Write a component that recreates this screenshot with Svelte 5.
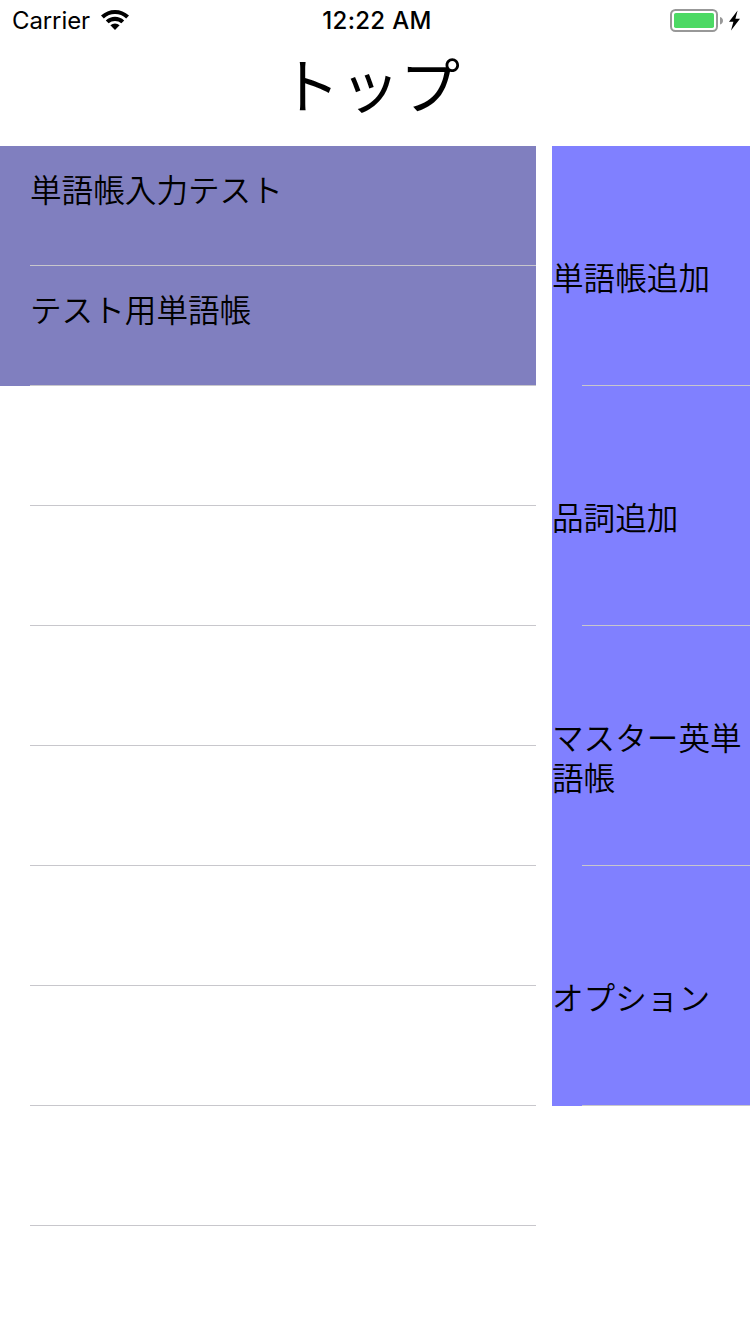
<script>
  const books = ['単語帳入力テスト', 'テスト用単語帳', '', '', '', '', '', '', ''];
  const actions = ['単語帳追加', '品詞追加', 'マスター英単語帳', 'オプション'];
</script>

<main class="screen">
  <header class="status">
    <div class="carrier">
      <span>Carrier</span>
      <svg class="wifi" width="28" height="20" viewBox="0 0 28 20" aria-hidden="true">
        <path d="M0 5.6Q6 0 14 0T28 5.6L25.2 8.4Q20.4 4.1 14 4.1T2.8 8.4Z" />
        <path d="M4.8 10.5Q8.9 6.8 14 6.8T23.2 10.5L20.4 13.3Q17.6 10.9 14 10.9T7.6 13.3Z" />
        <path d="M9.4 15.3Q11.4 13.4 14 13.4T18.6 15.3L14 20Z" />
      </svg>
    </div>
    <span class="time">12:22 AM</span>
    <svg class="battery" width="72" height="24" viewBox="0 0 72 24" aria-hidden="true">
      <rect x="1" y="1" width="46" height="21" rx="4.5" fill="none" stroke="#989898" stroke-width="2" />
      <rect x="4" y="4" width="40" height="15" rx="1.8" fill="#4cd964" />
      <path d="M50 8Q53 9 53 11.8T50 15.6Z" fill="#989898" />
      <path d="M67.6 1.5L59 12.8H63.4L61 21.5L70 9.8H65.4Z" />
    </svg>
  </header>

  <h1>トップ</h1>

  <div class="lists">
    <ul class="books">
      {#each books as book}
        <li class:filled={book}><span>{book}</span></li>
      {/each}
    </ul>
    <ul class="actions">
      {#each actions as action}
        <li><span>{action}</span></li>
      {/each}
    </ul>
  </div>
</main>

<style>
  :global(body) {
    margin: 0;
    background: #fff;
  }
  .screen {
    width: 750px;
    height: 1334px;
    overflow: hidden;
    color: #000;
    font-family: 'Noto Sans CJK JP', sans-serif;
  }
  .status {
    display: grid;
    grid-template-columns: 1fr auto 1fr;
    align-items: center;
    height: 42px;
    box-sizing: border-box;
    padding: 0 8px 0 12px;
    font: 24px/42px Inter, sans-serif;
  }
  .carrier {
    display: flex;
    align-items: center;
    gap: 11px;
    letter-spacing: -0.1px;
  }
  .wifi {
    margin-bottom: 2px;
  }
  .time {
    font-weight: 550;
    letter-spacing: 0.3px;
  }
  .battery {
    justify-self: end;
    margin-bottom: 1px;
  }
  h1 {
    height: 104px;
    box-sizing: border-box;
    margin: 0;
    padding-right: 10px;
    font-size: 60px;
    font-weight: 400;
    line-height: 81px;
    text-align: center;
  }
  .lists {
    display: flex;
    gap: 16px;
  }
  ul {
    margin: 0;
    padding: 0;
    list-style: none;
    font-size: 31.6px;
    font-weight: 350;
    line-height: 40px;
  }
  li {
    display: flex;
    box-sizing: border-box;
  }
  li::after {
    content: '';
    height: 1px;
    background: #c8c7cc;
  }
  .books {
    width: 536px;
  }
  .books li {
    flex-direction: column;
    justify-content: space-between;
    height: 120px;
    padding: 22px 0 0 30px;
  }
  .books .filled {
    background: #807fbf;
  }
  .actions {
    width: 198px;
  }
  .actions li {
    display: grid;
    grid-template-rows: 1fr 1px;
    align-items: center;
    height: 240px;
    padding-top: 21px;
    background: #8080ff;
  }
  .actions li::after {
    margin-left: 30px;
  }
</style>
